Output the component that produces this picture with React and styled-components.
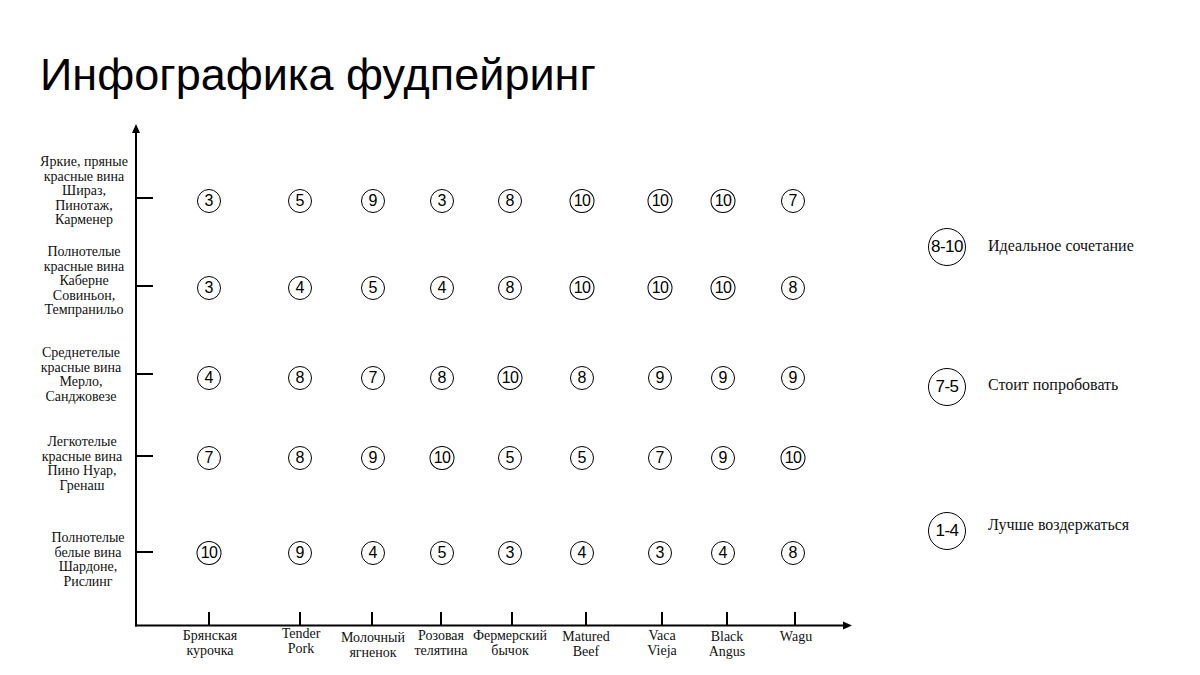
import React from "react";
import styled, { createGlobalStyle } from "styled-components";

const GlobalStyle = createGlobalStyle`
  html, body { margin: 0; padding: 0; background: #ffffff; }
  body { font-family: "Liberation Sans", Arial, sans-serif; color: #000; }
`;

const Page = styled.div`
  width: 1200px;
  height: 675px;
  overflow: hidden;
  box-sizing: border-box;
  padding-top: 52px;
  display: flex;
  flex-direction: column;
  background: #fff;
`;

const Title = styled.h1`
  margin: 0 0 0 40px;
  font-family: "Liberation Sans", Arial, sans-serif;
  font-weight: 400;
  font-size: 45px;
  line-height: 45px;
  height: 45px;
  color: #000;
`;

const Body = styled.div`
  margin-top: 23px;
  display: flex;
  flex-direction: row;
  align-items: flex-start;
`;

const Chart = styled.div`
  position: relative;
  width: 870px;
  height: 540px;
  flex: none;
`;

const AxisSvg = styled.svg`
  position: absolute;
  left: 0;
  top: 0;
`;

const YLabel = styled.div`
  position: absolute;
  width: 120px;
  transform: translate(-50%, -50%);
  text-align: center;
  font-family: "Liberation Serif", "Times New Roman", serif;
  font-size: 14px;
  line-height: 14.5px;
  color: #111;
  white-space: nowrap;
`;

const XLabel = styled.div`
  position: absolute;
  transform: translateX(-50%);
  text-align: center;
  font-family: "Liberation Serif", "Times New Roman", serif;
  font-size: 14px;
  line-height: 15px;
  color: #111;
  white-space: nowrap;
`;

const Marker = styled.div`
  position: absolute;
  box-sizing: border-box;
  width: ${(p) => (p.$wide ? "25px" : "24px")};
  height: 24px;
  transform: translate(-50%, -50%);
  border: 1px solid #000;
  border-radius: 50%;
  display: flex;
  align-items: center;
  justify-content: center;
  font-family: "Liberation Sans", Arial, sans-serif;
  font-size: 16px;
  line-height: 1;
  letter-spacing: ${(p) => (p.$wide ? "-0.6px" : "0")};
  color: #000;
  background: #fff;
`;

const Legend = styled.div`
  margin-left: 58px;
  padding-top: 108px;
  display: flex;
  flex-direction: column;
  gap: 102px;
`;

const LegendItem = styled.div`
  display: flex;
  align-items: center;
  gap: 22px;
  height: 38px;
`;

const LegendBadge = styled.div`
  box-sizing: border-box;
  width: 38px;
  height: 38px;
  border: 1px solid #000;
  border-radius: 50%;
  display: flex;
  align-items: center;
  justify-content: center;
  font-family: "Liberation Sans", Arial, sans-serif;
  font-size: 17px;
  letter-spacing: -0.5px;
  color: #000;
  transform: translateY(${(p) => p.$shift || 0}px);
`;

const LegendText = styled.div`
  font-family: "Liberation Serif", "Times New Roman", serif;
  font-size: 16px;
  color: #111;
  transform: translateY(${(p) => p.$shift || 0}px);
`;

const OFFSET = 120;

const cols = [
  { x: 209, tick: 209, lx: 210, ly: 628, label: ["Брянская", "курочка"] },
  { x: 300, tick: 300, lx: 301, ly: 626, label: ["Tender", "Pork"] },
  { x: 373, tick: 372, lx: 373, ly: 630, label: ["Молочный", "ягненок"] },
  { x: 442, tick: 441, lx: 441, ly: 628, label: ["Розовая", "телятина"] },
  { x: 510, tick: 512, lx: 510, ly: 628, label: ["Фермерский", "бычок"] },
  { x: 582, tick: 586, lx: 586, ly: 629, label: ["Matured", "Beef"] },
  { x: 660, tick: 662, lx: 662, ly: 628, label: ["Vaca", "Vieja"] },
  { x: 723, tick: 727, lx: 727, ly: 629, label: ["Black", "Angus"] },
  { x: 793, tick: 795, lx: 796, ly: 629, label: ["Wagu"] },
];

const rows = [
  {
    y: 201,
    tick: 198,
    lx: 84,
    ly: 191,
    label: ["Яркие, пряные", "красные вина", "Шираз,", "Пинотаж,", "Карменер"],
    values: [3, 5, 9, 3, 8, 10, 10, 10, 7],
  },
  {
    y: 288,
    tick: 286,
    lx: 84,
    ly: 281,
    label: ["Полнотелые", "красные вина", "Каберне", "Совиньон,", "Темпранильо"],
    values: [3, 4, 5, 4, 8, 10, 10, 10, 8],
  },
  {
    y: 378,
    tick: 374,
    lx: 81,
    ly: 375,
    label: ["Среднетелые", "красные вина", "Мерло,", "Санджовезе"],
    values: [4, 8, 7, 8, 10, 8, 9, 9, 9],
  },
  {
    y: 458,
    tick: 456,
    lx: 82,
    ly: 464,
    label: ["Легкотелые", "красные вина", "Пино Нуар,", "Гренаш"],
    values: [7, 8, 9, 10, 5, 5, 7, 9, 10],
  },
  {
    y: 553,
    tick: 552,
    lx: 88,
    ly: 560,
    label: ["Полнотелые", "белые вина", "Шардоне,", "Рислинг"],
    values: [10, 9, 4, 5, 3, 4, 3, 4, 8],
  },
];

const legend = [
  { badge: "8-10", text: "Идеальное сочетание", badgeShift: 0, textShift: -1 },
  { badge: "7-5", text: "Стоит попробовать", badgeShift: 0, textShift: -2 },
  { badge: "1-4", text: "Лучше воздержаться", badgeShift: 4, textShift: -2 },
];

function Axes() {
  const axisX = 136;
  const axisY = 625.5 - OFFSET;
  return (
    <AxisSvg width="870" height="540" viewBox="0 0 870 540">
      <line x1={axisX} y1={12} x2={axisX} y2={axisY + 1} stroke="#000" strokeWidth="2" />
      <polygon points={`${axisX},4 ${axisX - 4},13 ${axisX + 4},13`} fill="#000" />
      <line x1={axisX - 1} y1={axisY} x2={845} y2={axisY} stroke="#000" strokeWidth="2" />
      <polygon points={`852,${axisY} 843,${axisY - 4} 843,${axisY + 4}`} fill="#000" />
      {rows.map((r, i) => (
        <line
          key={`yt${i}`}
          x1={axisX}
          y1={r.tick - OFFSET}
          x2={153}
          y2={r.tick - OFFSET}
          stroke="#000"
          strokeWidth="2"
        />
      ))}
      {cols.map((c, i) => (
        <line
          key={`xt${i}`}
          x1={c.tick}
          y1={612 - OFFSET}
          x2={c.tick}
          y2={axisY}
          stroke="#000"
          strokeWidth="2"
        />
      ))}
    </AxisSvg>
  );
}

export default function App() {
  return (
    <>
      <GlobalStyle />
      <Page>
        <Title>Инфографика фудпейринг</Title>
        <Body>
          <Chart>
            <Axes />
            {rows.map((r, i) => (
              <YLabel key={`yl${i}`} style={{ left: r.lx, top: r.ly - OFFSET }}>
                {r.label.map((t, k) => (
                  <div key={k}>{t}</div>
                ))}
              </YLabel>
            ))}
            {cols.map((c, i) => (
              <XLabel key={`xl${i}`} style={{ left: c.lx, top: c.ly - OFFSET }}>
                {c.label.map((t, k) => (
                  <div key={k}>{t}</div>
                ))}
              </XLabel>
            ))}
            {rows.map((r, i) =>
              r.values.map((v, j) => (
                <Marker
                  key={`m${i}-${j}`}
                  $wide={v >= 10}
                  style={{ left: cols[j].x, top: r.y - OFFSET }}
                >
                  {v}
                </Marker>
              ))
            )}
          </Chart>
          <Legend>
            {legend.map((l, i) => (
              <LegendItem key={i}>
                <LegendBadge $shift={l.badgeShift}>{l.badge}</LegendBadge>
                <LegendText $shift={l.textShift}>{l.text}</LegendText>
              </LegendItem>
            ))}
          </Legend>
        </Body>
      </Page>
    </>
  );
}
